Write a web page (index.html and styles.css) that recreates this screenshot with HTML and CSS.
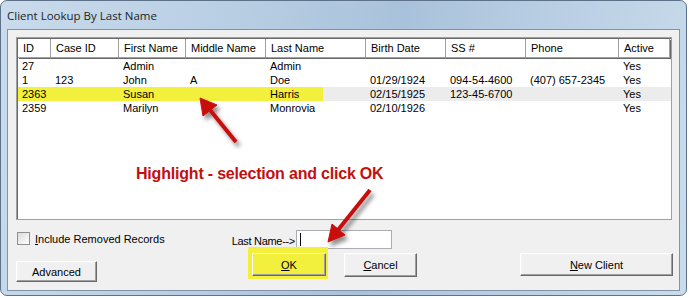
FILE: index.html
```html
<!DOCTYPE html>
<html lang="en">

<head>
    <meta charset="UTF-8">
    <title>Client Lookup By Last Name</title>
    <link rel="stylesheet" href="styles.css">
</head>

<body>
    <div class="window">
        <div class="titlebar">Client Lookup By Last Name</div>

        <div class="client">
            <!-- Client list -->
            <div class="listview">
                <div class="lv-row lv-head">
                    <div>ID</div><div>Case ID</div><div>First Name</div><div>Middle Name</div><div>Last Name</div>
                    <div>Birth Date</div><div>SS #</div><div>Phone</div><div>Active</div>
                </div>
                <div class="lv-row">
                    <div>27</div><div></div><div>Admin</div><div></div><div>Admin</div>
                    <div></div><div></div><div></div><div>Yes</div>
                </div>
                <div class="lv-row">
                    <div>1</div><div>123</div><div>John</div><div>A</div><div>Doe</div>
                    <div>01/29/1924</div><div>094-54-4600</div><div>(407) 657-2345</div><div>Yes</div>
                </div>
                <div class="lv-row selected">
                    <div>2363</div><div></div><div>Susan</div><div></div><div>Harris</div>
                    <div>02/15/1925</div><div>123-45-6700</div><div></div><div>Yes</div>
                </div>
                <div class="lv-row">
                    <div>2359</div><div></div><div>Marilyn</div><div></div><div>Monrovia</div>
                    <div>02/10/1926</div><div></div><div></div><div>Yes</div>
                </div>
            </div>

            <!-- Options -->
            <div class="opts">
                <label class="check"><span class="box"></span><span><u>I</u>nclude Removed Records</span></label>
                <span class="lastname-label">Last Name--&gt;</span>
                <span class="textbox"><span class="caret"></span></span>
            </div>

            <!-- Buttons -->
            <div class="actions">
                <button class="btn btn-adv">Advanced</button>
                <div class="mark"><button class="btn btn-ok"><u>O</u>K</button></div>
                <button class="btn btn-cancel"><u>C</u>ancel</button>
                <button class="btn btn-new"><u>N</u>ew Client</button>
            </div>
        </div>

        <!-- Annotation -->
        <div class="note">Highlight - selection and click OK</div>
        <svg class="arrows" width="689" height="298" viewBox="0 0 689 298">
            <defs>
                <filter id="shadow" x="-50%" y="-50%" width="200%" height="200%">
                    <feDropShadow dx="3" dy="4" stdDeviation="2" flood-color="#000" flood-opacity="0.45" />
                </filter>
            </defs>
            <g filter="url(#shadow)" fill="#c81010" stroke="#c81010">
                <line x1="236" y1="142" x2="210" y2="110" stroke-width="4" />
                <polygon points="200,98 217,105 203,116" stroke-width="1" />
                <line x1="370" y1="190" x2="338" y2="230" stroke-width="4" />
                <polygon points="328,242 345,235 332,224" stroke-width="1" />
            </g>
        </svg>
    </div>
</body>

</html>
```

FILE: styles.css
```css
body {
    margin: 0;
    background: #ffffff;
    font-family: "Liberation Sans", Arial, sans-serif;
    font-size: 11px;
    color: #000000;
}

.window {
    position: relative;
    width: 687px;
    height: 296px;
    border: 1px solid #5d7288;
    border-radius: 7px;
    background: linear-gradient(100deg, #c9dbec 0%, #b9cfe4 30%, #a9c2db 55%, #bcd1e5 80%, #cadcec 100%);
    padding: 0 6px;
    box-sizing: border-box;
}

.titlebar {
    height: 28px;
    line-height: 30px;
    font-family: "Open Sans", sans-serif;
    font-size: 11.5px;
    color: #1e1e1e;
}

.client {
    height: 262px;
    background: #f0f0f0;
    border: 1px solid #8093a8;
    box-sizing: border-box;
}

/* list view */
.listview {
    margin: 7px 7px 0 8px;
    height: 183px;
    background: #ffffff;
    border: 1px solid #a0a0a0;
    box-shadow: inset 1px 1px 0 #696969;
    padding: 1px 0 0 1px;
    box-sizing: border-box;
}

.lv-row {
    display: grid;
    grid-template-columns: 33px 68px 67px 80px 100px 80px 80px 93px 51px;
    height: 14px;
    line-height: 14px;
}

.lv-row div {
    padding-left: 4px;
    white-space: nowrap;
    overflow: hidden;
}

.lv-head {
    height: 19px;
    line-height: 18px;
    margin-bottom: 1px;
}

.lv-head div {
    background: #ffffff;
    border-right: 1px solid #a0a0a0;
    border-bottom: 1px solid #a0a0a0;
    box-shadow: 1px 1px 0 #696969, inset 1px 1px 0 #ffffff;
    padding-left: 5px;
}

.lv-row.selected {
    background: linear-gradient(to right, #f2f03c 305px, #ececec 305px);
}

/* options */
.opts {
    display: grid;
    grid-template-columns: 1fr auto 96px;
    align-items: end;
    width: 375px;
    margin-top: 9px;
    padding-left: 9px;
    height: 20px;
}

.check {
    display: flex;
    align-items: center;
    gap: 5px;
    align-self: start;
    margin-top: 3px;
    height: 13px;
}

.box {
    width: 11px;
    height: 11px;
    border: 1px solid #8e8f8f;
    background: linear-gradient(135deg, #dcdcdc, #ffffff);
}

.lastname-label {
    line-height: 13px;
    padding: 0 1px 1px 0;
    letter-spacing: -0.3px;
}

.textbox {
    height: 19px;
    background: #ffffff;
    border: 1px solid #abadb3;
    box-sizing: border-box;
    padding: 2px 0 0 3px;
}

.caret {
    display: block;
    width: 1px;
    height: 13px;
    background: #000000;
}

/* buttons */
.actions {
    display: flex;
    align-items: flex-start;
    margin-top: 4px;
}

.btn {
    font-family: "Liberation Sans", Arial, sans-serif;
    font-size: 11px;
    color: #000000;
    background: #f0f0f0;
    border: 1px solid;
    border-color: #ffffff #696969 #696969 #ffffff;
    box-shadow: inset -1px -1px 0 #a0a0a0, inset 1px 1px 0 #f4f4f4;
    padding: 0;
    cursor: pointer;
}

.btn-adv {
    margin: 8px 0 0 8px;
    width: 81px;
    height: 21px;
}

.mark {
    margin: -6px 0 0 151px;
    width: 80px;
    height: 32px;
    background: #f2f03c;
    padding: 6px 0 0 4px;
    box-sizing: border-box;
}

.btn-ok {
    width: 74px;
    height: 23px;
    background: #f2f03c;
    box-shadow: inset -1px -1px 0 #a0a0a0;
}

.btn-cancel {
    margin-left: 16px;
    width: 73px;
    height: 24px;
}

.btn-new {
    margin-left: 103px;
    width: 153px;
    height: 23px;
}

/* annotation */
.note {
    position: absolute;
    left: 135px;
    top: 164px;
    font-family: "Liberation Sans", Arial, sans-serif;
    font-weight: bold;
    font-size: 16px;
    letter-spacing: -0.2px;
    color: #c40f0f;
    white-space: nowrap;
}

.arrows {
    position: absolute;
    left: -1px;
    top: -1px;
    pointer-events: none;
}
```
